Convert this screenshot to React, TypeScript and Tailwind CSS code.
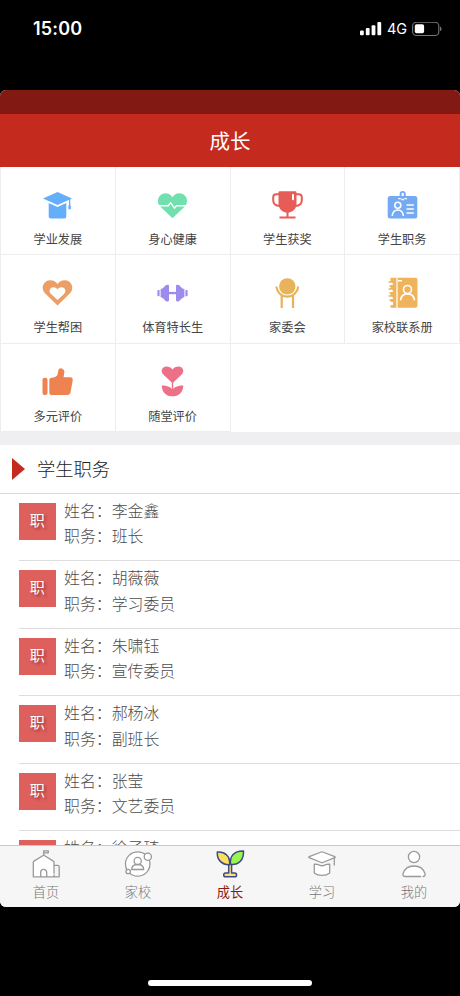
import type { ReactNode } from "react";

// ── Data ──────────────────────────────────────────────────────────────────────

type Duty = { name: string; duty?: string };

const DUTIES: Duty[] = [
  { name: "李金鑫", duty: "班长" },
  { name: "胡薇薇", duty: "学习委员" },
  { name: "朱啸钰", duty: "宣传委员" },
  { name: "郝杨冰", duty: "副班长" },
  { name: "张莹", duty: "文艺委员" },
  { name: "徐子琦" },
];

const MENU: { label: string; icon: ReactNode }[] = [
  {
    label: "学业发展",
    icon: (
      <g fill="#65aefa">
        <path d="M1 8.4 15.5 2 30 8.4 15.5 15Z" />
        <path d="M6.7 13l8.8 4 8.8-4v13.4a2 2 0 0 1-2 2H8.7a2 2 0 0 1-2-2Z" />
        <path d="M27 9h1.3v6.5h.6v3.7h-2.5v-3.7h.6Z" />
      </g>
    ),
  },
  {
    label: "身心健康",
    icon: (
      <>
        <path
          d="M15.5 28.2 3.2 16.4C-1.5 11.8 1.7 3.2 8.2 3.2c3.3 0 5.6 1.5 7.3 4 1.7-2.5 4-4 7.3-4 6.5 0 9.7 8.6 5 13.2Z"
          fill="#6fe0ae"
        />
        <path d="M0 15.8h11.3l2.3-3 4 5.4 1.8-2.4H31" fill="none" stroke="#fff" strokeWidth="1.4" />
      </>
    ),
  },
  {
    label: "学生获奖",
    icon: (
      <>
        <path d="M8 4.2H4.2a3 3 0 0 0-3 3v3c0 3.3 2.5 5.500 6.600 5.700M23 4.2h3.800a3 3 0 0 1 3 3v3c0 3.3-2.500 5.500-6.600 5.700" fill="none" stroke="#e65d58" strokeWidth="2" />
        <path d="M6.500 2.500a1.300 1.300 0 0 1 1.300-1.300h15.400a1.300 1.300 0 0 1 1.300 1.300v10.800c0 6-4 8.600-8 9.500v3.800h7v1.900h-16v-1.900h7v-3.800c-4-.9-8-3.500-8-9.500Z" fill="#e65d58" />
        <rect x="20" y="4" width="2" height="6.2" rx=".8" fill="#fff" />
      </>
    ),
  },
  {
    label: "学生职务",
    icon: (
      <>
        <rect x=".7" y="6" width="29.6" height="22.5" rx="2.5" fill="#74aaf4" />
        <path d="M13.6 7V4a2.100 2.100 0 0 1 4.200 0v3" fill="none" stroke="#74aaf4" strokeWidth="1.900" />
        <g fill="none" stroke="#fff" strokeWidth="1.6">
          <path d="M11.300 8.700h2.500M17.500 8.700h2.500M14.300 9.500h2.800" strokeWidth="1.300" />
          <circle cx="10.8" cy="15.3" r="3" />
          <path d="M5.200 26c.4-4 2.700-6 5.600-6s5.200 2 5.600 6M19.500 15h7.300M19.500 19h7.300M19.500 23h7.300" />
        </g>
      </>
    ),
  },
  {
    label: "学生帮困",
    icon: (
      <>
        <path
          d="M15.500 27.500 3 15.200C-2 10.200 1.800 2.300 8.200 2.300c3.400 0 5.700 1.400 7.300 3.800 1.600-2.400 3.900-3.800 7.300-3.800 6.400 0 10.200 7.900 5.200 12.900Z"
          fill="#eb9e66"
        />
        <path
          d="M15.500 22 9 15.900c-3-3-.7-6.700 2.300-6.700 2 0 3.300.8 4.200 2.400.9-1.600 2.200-2.400 4.200-2.400 3 0 5.300 3.700 2.300 6.700Z"
          fill="#fff"
        />
      </>
    ),
  },
  {
    label: "体育特长生",
    icon: (
      <g fill="#9e8bee">
        <rect x=".4" y="12" width="2.200" height="6.200" rx=".7" />
        <path d="M3.600 11c3.600-.6 3.900-4.300 7-4.300h.2c.7 0 1.200.5 1.200 1.200v14.400c0 .7-.5 1.200-1.200 1.200h-.2c-3.100 0-3.400-3.700-7-4.300Z" />
        <path d="M27.400 11c-3.600-.6-3.900-4.300-7-4.300h-.2c-.7 0-1.200.5-1.200 1.200v14.400c0 .7.5 1.200 1.200 1.200h.2c3.100 0 3.400-3.700 7-4.300Z" />
        <rect x="28.400" y="12" width="2.200" height="6.200" rx=".7" />
        <rect x="11" y="13.900" width="9" height="2.300" />
      </g>
    ),
  },
  {
    label: "家委会",
    icon: (
      <>
        <circle cx="15.300" cy="8.400" r="8.200" fill="#e7b35b" />
        <path d="M4.300 8.500c.6 5.700 5.300 10.200 11 10.200s10.400-4.500 11-10.200M9.700 17.500V30M21 17.500V30" fill="none" stroke="#e7b35b" strokeWidth="2.200" />
      </>
    ),
  },
  {
    label: "家校联系册",
    icon: (
      <>
        <path d="M3.500-.2h25a2 2 0 0 1 2 2v26a2 2 0 0 1-2 2h-25Z" fill="#efb35b" />
        <path d="M10-.5v31" stroke="#fff" strokeWidth="1.200" />
        <path d="M1 5.500h5M1 12.500h5M1 19.500h5M1 25.500h5" stroke="#fff" strokeWidth="3" />
        <path d="M1.500 4h3.200a2 2 0 0 1 0 4H2.500M1.500 11h3.200a2 2 0 0 1 0 4H2.500M1.500 18h3.200a2 2 0 0 1 0 4H2.500" fill="none" stroke="#efb35b" strokeWidth="1.500" />
        <circle cx="20.500" cy="11.500" r="4" fill="none" stroke="#fff" strokeWidth="1.600" />
        <path d="M13.500 22.300c.5-4.300 3.300-6.400 7-6.400s6.500 2.100 7 6.400M11 2.700h4" fill="none" stroke="#fff" strokeWidth="1.600" />
      </>
    ),
  },
  {
    label: "多元评价",
    icon: (
      <g fill="#ee8351">
        <rect x=".5" y="10.800" width="5" height="17.200" rx="2" />
        <path d="M7.300 13a2.200 2.200 0 0 1 2-2.200c3.200 0 5.800-1.400 6.300-3.600l.7-3.600c.4-2 1.900-2.700 3.400-2.200 2.200.6 3 2.400 2.600 4.700l-.8 4.200h6.600c2 0 3 1.300 2.600 3.200l-2.200 12.100c-.4 1.700-1.400 2.400-3 2.400h-16A2.200 2.200 0 0 1 7.300 25.800Z" />
      </g>
    ),
  },
  {
    label: "随堂评价",
    icon: (
      <>
        <path d="M15.500 16.300 6.300 7.500c-3.400-3.400-1-8 3-8 2.800 0 4.900 1 6.200 3 1.300-2 3.400-3 6.200-3 4 0 6.400 4.600 3 8Z" fill="#ed7089" />
        <path d="M14.800 15h1.400v9h-1.400Z" fill="#ed7089" />
        <path d="M4.700 18.400c5.700 0 9.200 1.500 10.800 4.600 1.600-3.100 5.100-4.600 10.800-4.600-.3 7-4.600 10.900-10.800 10.900S5 25.400 4.700 18.400Z" fill="#ed7089" />
      </>
    ),
  },
];

const TABS: { label: string; icon: ReactNode; active?: boolean }[] = [
  {
    label: "首页",
    icon: (
      <>
        <path d="M1.300 26.800V11.500L11.700 5.300 22 11.500v15.300Z" fill="#fff" stroke="none" />
        <path d="M22 15.300h3.600a1.600 1.600 0 0 1 1.600 1.600v9.900H1.300V12.300q0-.8.700-1.200l8.700-5.400q1-.6 2 0l8.600 5.400q.7.400.7 1.200v10.900M22 25v1.800M8.700 26.800v-4.500a3 3 0 0 1 6 0v4.500M11.700 5.300V.8h4.600v2h-4.600" />
      </>
    ),
  },
  {
    label: "家校",
    icon: (
      <>
        <circle cx="13.700" cy="14" r="12.200" fill="#fff" />
        <circle cx="23.800" cy="6.800" r="3.600" fill="#fff" />
        <circle cx="4.200" cy="21.500" r="2.200" fill="#fff" />
        <circle cx="13.700" cy="11" r="3.600" />
        <path d="M7.700 19.500c0-3 2.400-5 6-5s6 2 6 5Z" />
      </>
    ),
  },
  {
    label: "成长",
    active: true,
    icon: (
      <>
        <path d="M12.700 13.500v9.600H9.500c-2.400 0-2.400 3.600 0 3.600h9.300c2.400 0 2.400-3.600 0-3.600h-3.200v-9.600Z" fill="#fae17a" />
        <path d="M13.500 14.700C5.800 15 .8 9.800 1.300 2 8.800 1.200 14.700 6.500 13.500 14.700Z" fill="#fae05d" />
        <path d="M14.700 14.500C13.200 6.500 17.800.8 27.500 1c.4 8.700-4.500 14.200-12.800 13.500Z" fill="#98f552" />
      </>
    ),
  },
  {
    label: "学习",
    icon: (
      <>
        <path d="M1.200 7.700c-.5-.2-.5-.9 0-1.100L13.300 2a2 2 0 0 1 1.400 0l12.100 4.600c.5.200.5.900 0 1.100L14.700 12.500a2 2 0 0 1-1.400 0ZM6.300 14.200c5 .1 6 1.700 7.700 1.700s2.700-1.600 7.700-1.700V23c-3.700 3.200-11.700 3.200-15.400 0Z" fill="#fff" />
        <path d="M26.300 8v7" />
      </>
    ),
  },
  {
    label: "我的",
    icon: (
      <>
        <circle cx="14" cy="7" r="5.600" fill="#fff" />
        <path d="M20.500 26.500H5c-2 0-2.400-1.200-2-2.700C4.400 19 8.600 16 14 16s9.600 3 11 7.800c.4 1.500 0 2.700-2 2.700" fill="#fff" />
      </>
    ),
  },
];

// ── Status bar ────────────────────────────────────────────────────────────────

function StatusBar() {
  return (
    <div className="flex h-[89.500px] shrink-0 items-start justify-between pl-[33px] pr-[18px] pt-[17px] text-white">
      <span className="font-['Inter'] text-[18px] font-semibold leading-6 tracking-[0.2px]">15:00</span>
      <div className="flex h-6 items-center">
        <svg className="h-[14px] w-[22px]" viewBox="0 0 22 14" fill="#fff">
          <rect x="0" y="8.500" width="3.800" height="4.700" rx="1" />
          <rect x="5.800" y="6" width="3.800" height="7.200" rx="1" />
          <rect x="11.600" y="3.200" width="3.800" height="10" rx="1" />
          <rect x="17.400" y="0" width="3.800" height="13.200" rx="1" />
        </svg>
        <span className="ml-[5px] w-[20px] font-['Inter'] text-[14.500px] font-normal leading-6 tracking-[-0.2px]">4G</span>
        <svg className="ml-[5px] h-[15px] w-[30px]" viewBox="0 0 30 15">
          <rect x=".6" y=".2" width="26.200" height="13.300" rx="3.800" fill="none" stroke="#777" strokeWidth="1.100" />
          <rect x="2.800" y="2.300" width="9.300" height="9" rx="1.800" fill="#fff" />
          <path d="M28 4.700c2 .6 2 3.800 0 4.400Z" fill="#777" />
        </svg>
      </div>
    </div>
  );
}

// ── Sections ──────────────────────────────────────────────────────────────────

function MenuGrid() {
  return (
    <div className="grid h-[265px] shrink-0 grid-cols-4 grid-rows-3 border-l border-[#ededed]">
      {MENU.map((item) => (
        <div key={item.label} className="flex flex-col items-center border-b border-r border-[#ededed] pt-[23px]">
          <svg className="h-[31px] w-[31px] overflow-visible" viewBox="0 0 31 31">
            {item.icon}
          </svg>
          <span className="mt-[9px] text-[12.200px] font-normal leading-[18px] text-[#444]">{item.label}</span>
        </div>
      ))}
    </div>
  );
}

function DutyRow({ name, duty }: Duty) {
  return (
    <div className="ml-[19px] flex h-[67.500px] shrink-0 border-b border-[#dedede]">
      <div className="mt-[9px] flex h-[37px] w-[36.500px] items-center justify-center bg-[#de605c] pb-[2px] text-[15px] font-normal text-white [text-shadow:2px_2px_3px_rgba(80,0,0,0.450)]">
        职
      </div>
      <div className="ml-[8.500px] mt-[4px] text-[15.900px] leading-[25.600px] text-[#4c4c4c]">
        <p>姓名：{name}</p>
        {duty && <p>职务：{duty}</p>}
      </div>
    </div>
  );
}

function TabBar() {
  return (
    <nav className="grid h-[62px] shrink-0 grid-cols-5 border-t border-[#c8c8c8] bg-[#f6f6f6]">
      {TABS.map((tab) => (
        <div key={tab.label} className="flex flex-col items-center pt-[4px]">
          <svg
            className="h-[28px] w-[28px] overflow-visible"
            viewBox="0 0 28 28"
            fill="none"
            stroke={tab.active ? "#3e4a84" : "#999"}
            strokeWidth={tab.active ? 1.5 : 1.3}
            strokeLinecap="round"
            strokeLinejoin="round"
          >
            {tab.icon}
          </svg>
          <span
            className={`mt-[4px] text-[13.200px] leading-[20px] ${
              tab.active ? "font-normal text-[#8f1a12]" : "text-[#777]"
            }`}
          >
            {tab.label}
          </span>
        </div>
      ))}
    </nav>
  );
}

// ── Page ──────────────────────────────────────────────────────────────────────

export default function App() {
  return (
    <div className="flex h-[996px] w-[460px] flex-col overflow-hidden bg-black font-['Noto_Sans_CJK_SC',sans-serif] font-light">
      <StatusBar />
      <main className="flex h-[817px] shrink-0 flex-col overflow-hidden rounded-[6px] bg-white">
        <div className="h-[24px] shrink-0 bg-[#821912]" />
        <header className="flex h-[53.500px] shrink-0 items-center justify-center bg-[#c42b1e] text-[20.500px] font-normal text-white">
          成长
        </header>
        <MenuGrid />
        <div className="h-[13px] shrink-0 bg-[#efeff2]" />
        <div className="flex h-[48.500px] shrink-0 items-center border-b border-[#d8d8d8] pl-[12px]">
          <svg className="h-[22px] w-[13px]" viewBox="0 0 13 22">
            <path d="M0 0 13 11 0 22Z" fill="#c42b1e" />
          </svg>
          <h2 className="ml-[12px] text-[18.300px] text-[#222]">学生职务</h2>
        </div>
        <div className="flex min-h-0 flex-1 flex-col overflow-hidden">
          {DUTIES.map((d) => (
            <DutyRow key={d.name} {...d} />
          ))}
        </div>
        <TabBar />
      </main>
      <div className="mx-auto mt-[73px] h-[6px] w-[164px] shrink-0 rounded-full bg-white" />
    </div>
  );
}
